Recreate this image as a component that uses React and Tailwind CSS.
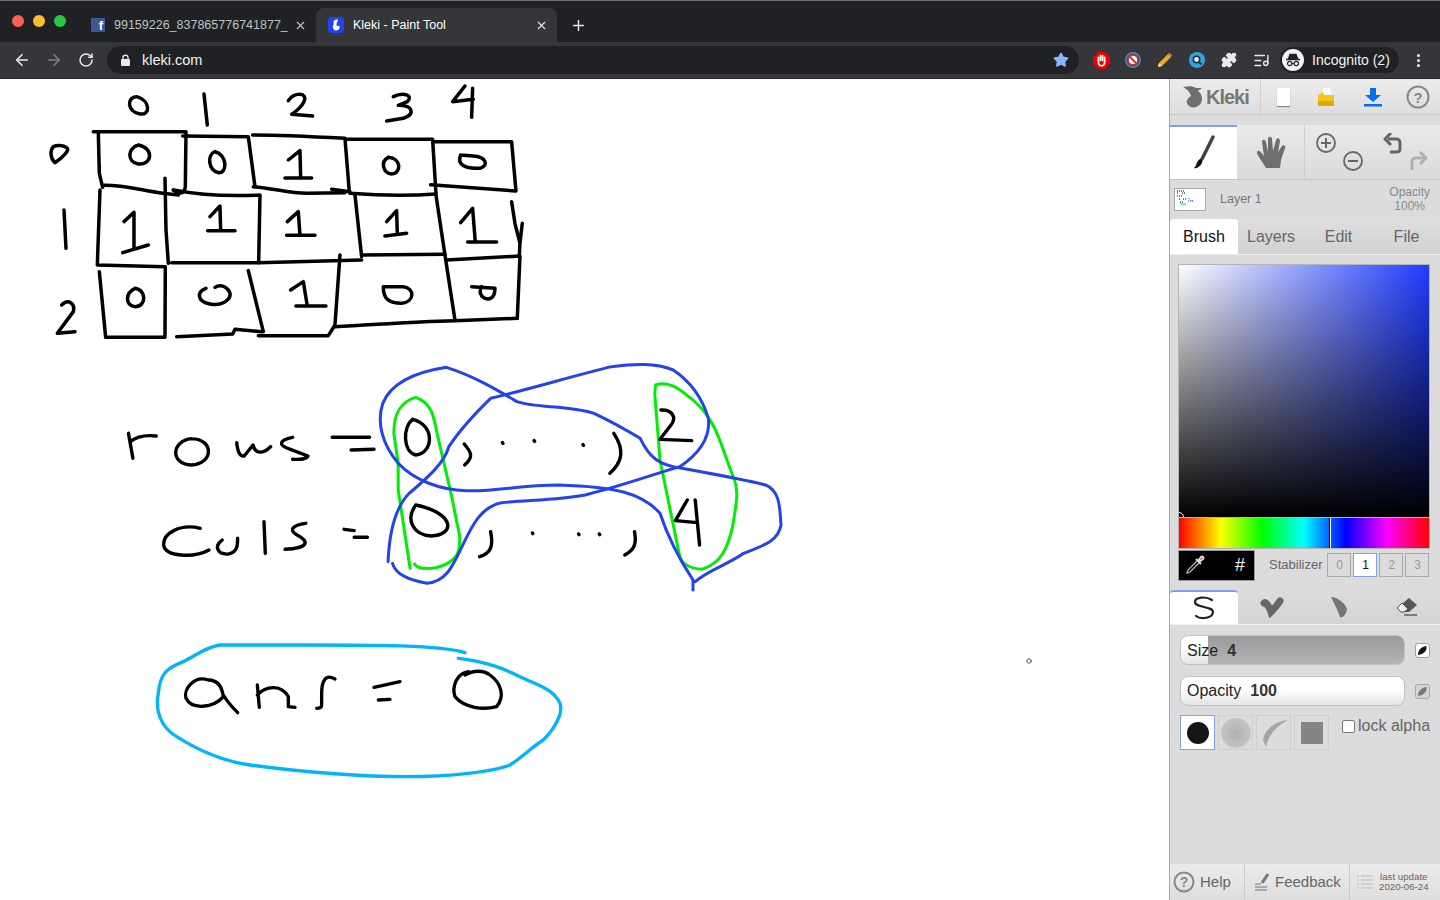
import { ArrowLeft, ArrowRight, RotateCw, Star, X, Plus, Puzzle, EllipsisVertical, ListMusic } from 'lucide-react';

const sans = { fontFamily: '"Liberation Sans", Arial, sans-serif' };

// strokes read off the drawing, in zoomed-crop coordinates
const tableStrokes = [
  // column and row labels
  'M290 50C258 52 262 95 300 102C332 106 332 62 290 50', 'M492 42L502 135',
  'M745 62C762 35 805 36 792 65C782 85 762 98 755 103L818 108',
  'M1060 50C1090 35 1122 45 1102 65L1075 76C1120 76 1126 102 1090 115L1040 123',
  'M1275 18L1238 65L1300 58M1298 25L1295 112',
  'M40 200C30 210 30 235 45 248C65 235 92 210 80 203C70 195 50 195 40 200', 'M72 390L78 505',
  'M65 675C85 655 106 670 100 695L52 760L105 755',
  // grid lines
  'M160 155L438 155L436 320C434 342 415 345 400 330',
  'M175 160L178 280L188 322', 'M190 316C250 315 300 330 370 340L415 345',
  'M428 168L625 170L645 320', 'M375 295L378 450L385 550',
  'M400 330C480 345 560 350 660 345L656 548', 'M638 165C720 165 820 170 915 175L928 335',
  'M640 320C700 325 750 340 800 340L915 338', 'M875 328L930 335',
  'M918 178L1178 178L1188 340', 'M930 340C1000 345 1100 348 1188 342',
  'M1180 185L1415 185L1428 333L1172 314', 'M180 330L172 555L375 560', 'M945 345L965 530',
  'M1188 345L1215 525L1245 720', 'M395 548L655 548L965 540', 'M965 525L1215 523',
  'M1220 540L1440 528L1432 715', 'M1415 365L1425 430L1440 490M1447 430L1440 490L1438 530',
  'M178 575L197 772L375 772L376 560', 'M410 770L578 762L585 748L665 755', 'M625 572L670 755',
  'M655 767L865 767L885 735L900 525', 'M885 740C1000 735 1100 725 1245 722L1432 715',
  // cell values, row 0
  'M295 195C262 205 260 245 295 252C335 256 345 205 295 195',
  'M525 215C500 225 505 270 535 278C565 280 560 222 525 215',
  'M745 240L780 212L782 292M735 294L815 294',
  'M1045 232C1020 245 1030 280 1055 282C1085 280 1085 235 1045 232',
  'M1262 225C1250 255 1275 265 1320 265C1350 255 1335 230 1300 228L1262 225',
  // row 1
  'M252 425L282 397L282 505M248 518L325 495',
  'M510 410L540 378L542 452M503 452L585 452',
  'M742 425L775 395L780 466M740 466L825 466',
  'M1040 425L1070 392L1072 462M1035 468L1100 460',
  'M1262 428L1298 385L1306 486M1283 486L1370 486',
  // row 2
  'M285 625C255 640 255 675 285 680C320 680 320 630 285 625',
  'M498 625C470 635 470 665 510 672C550 680 590 650 560 625C550 615 535 615 525 622',
  'M752 630L790 605L802 678M768 678L858 678',
  'M1030 620C1030 660 1050 670 1085 670C1125 665 1125 625 1090 620L1030 620',
  'M1295 620L1365 625C1365 655 1350 660 1335 655C1315 645 1320 625 1325 620',
];

const rowsColsBlack = [
  'M42 250L52 325M46 275C62 258 85 255 105 258',
  'M185 266C140 272 135 342 185 345C235 342 238 268 185 266',
  'M288 278C290 305 295 320 305 318L325 285C330 310 345 315 365 290',
  'M415 262C385 270 380 285 410 298L450 318C445 330 430 328 415 328',
  'M505 262L590 262M548 300L600 298',
  'M688 208C665 230 665 305 695 315C735 310 740 225 688 208',
  'M805 282C820 305 828 320 806 345',
  'M892 278L893 280M964 272L965 274M1075 284L1076 286',
  'M1145 250C1170 300 1165 335 1136 370',
  'M1252 180C1275 178 1290 200 1275 225L1250 268L1322 272',
  // cols
  'M205 535C160 520 120 550 122 585C125 620 190 625 225 600',
  'M255 570C235 590 245 615 270 612C290 605 290 585 290 565',
  'M350 515L353 610',
  'M445 520C415 525 405 540 425 555C455 575 450 595 398 598',
  'M532 538L555 542M555 562L585 562',
  'M695 465C670 510 690 555 730 558C785 555 785 490 695 465',
  'M865 545C872 590 865 610 840 620',
  'M960 549L961 551M1065 552L1066 554M1112 552L1113 554',
  'M1192 545C1198 585 1190 600 1170 615',
  'M1312 450L1285 512L1335 518M1330 450L1340 585',
];

const rowsColsGreen = [
  'M682 655L655 420L655 340L645 250C645 190 660 155 695 142C730 160 735 190 745 260L775 430L795 560C795 610 790 625 760 645C735 660 700 660 692 642',
  'M1240 105C1275 90 1300 125 1325 150C1380 215 1385 275 1415 375C1430 420 1425 450 1415 530C1405 590 1390 640 1345 658C1315 655 1300 640 1295 620L1270 460L1250 330L1238 130Z',
];

const rowsColsBlue = [
  'M632 635C635 540 650 470 680 430C720 385 760 340 770 290C795 240 830 190 865 145C960 115 1060 75 1140 50C1190 42 1240 38 1280 60C1320 95 1345 140 1360 205C1365 265 1340 310 1295 350C1230 375 1170 405 1080 435C1020 450 950 450 890 458C845 470 825 520 800 590C780 645 765 695 720 700C680 690 650 675 642 640',
  'M1325 720L1325 690C1300 640 1270 570 1250 490C1210 430 1150 410 1020 405C930 405 880 425 810 422C750 420 690 390 655 340C620 285 605 220 620 160C640 95 700 65 765 52C830 80 880 120 925 155C970 175 1040 165 1100 190C1140 215 1180 245 1205 265C1225 320 1245 345 1300 355C1360 370 1430 385 1490 405C1525 425 1522 480 1525 525C1520 570 1490 585 1440 610C1410 640 1360 660 1330 695',
];

const ansBlack = [
  'M205 150C160 135 130 180 138 205C155 240 220 235 250 200C245 160 225 150 205 150M250 195C265 220 280 235 293 248',
  'M352 165L358 232M352 195C380 165 425 165 445 200L445 230L465 232',
  'M585 147C555 130 545 155 545 190L545 225C545 235 535 235 530 235',
  'M702 172L780 155M715 210L750 208',
  'M985 125C950 130 935 170 945 200C975 235 1030 240 1070 230C1095 200 1085 160 1050 135C1030 120 1000 120 975 135',
];

const ansBlue = [
  'M975 68C900 45 700 45 500 45L240 45C200 50 170 75 130 95C80 115 60 130 55 190C45 240 60 290 110 320C180 365 260 395 330 405C480 425 640 440 800 440C930 440 1060 425 1110 405C1150 380 1170 355 1210 330C1245 295 1270 250 1260 220C1240 175 1190 165 1140 140C1090 115 1040 95 955 85',
];

function Canvas() {
  return (
    <div className="flex-1 bg-white">
      <svg width="1169" height="821" viewBox="0 79 1169 821" fill="none" strokeLinecap="round" strokeLinejoin="round">
        <g transform="translate(40 80) scale(0.3333)" stroke="#000" strokeWidth="10.5">
          {tableStrokes.map(d => <path key={d} d={d} />)}
        </g>
        {/* this crop was wider than it was tall, so x and y scale differently */}
        <g transform="translate(110 350) scale(0.44 0.3333)">
          <g stroke="#00ee00" strokeWidth="3">{rowsColsGreen.map(d => <path key={d} d={d} vectorEffect="non-scaling-stroke" />)}</g>
          <g stroke="#000" strokeWidth="3.4">{rowsColsBlack.map(d => <path key={d} d={d} vectorEffect="non-scaling-stroke" />)}</g>
          <g stroke="#2342f0" strokeWidth="3">{rowsColsBlue.map(d => <path key={d} d={d} vectorEffect="non-scaling-stroke" />)}</g>
        </g>
        <g transform="translate(140 630) scale(0.3333)" strokeWidth="10">
          <g stroke="#000">{ansBlack.map(d => <path key={d} d={d} />)}</g>
          <g stroke="#00b4ff">{ansBlue.map(d => <path key={d} d={d} />)}</g>
        </g>
        <circle cx="1029" cy="661" r="2.2" stroke="#555" strokeWidth="1" />
      </svg>
    </div>
  );
}

function BrowserChrome() {
  return (
    <div className="shrink-0 text-white" style={sans}>
      <div className="h-[42px] bg-[#202124] border-t border-[#6b6c6e] flex items-end">
        <div className="flex gap-[9px] pl-[12px] self-start pt-[14px] w-[88px]">
          <span className="w-3 h-3 rounded-full bg-[#ff5f57]" />
          <span className="w-3 h-3 rounded-full bg-[#ffbd2e]" />
          <span className="w-3 h-3 rounded-full bg-[#28c941]" />
        </div>
        <div className="w-[228px] h-[34px] flex items-center pl-[3px] pr-[9px] text-[12.5px] text-[#bdc1c6]">
          <span className="w-[14px] h-[14px] bg-[#3b5998] flex items-end justify-end pr-[2px] text-white text-[13px] font-bold leading-none overflow-hidden shrink-0">f</span>
          <span className="ml-[9px] w-[174px] overflow-hidden whitespace-nowrap">99159226_837865776741877_</span>
          <X size={13} strokeWidth={2} className="ml-auto text-[#c4c7cb]" />
        </div>
        <div className="w-[241px] h-[34px] bg-[#35363a] rounded-t-lg flex items-center pl-[12px] pr-[9px] text-[12.5px]">
          <svg width="16" height="16" viewBox="0 0 16 16" className="shrink-0">
            <rect width="16" height="16" rx="4" fill="#2342f0" />
            <path d="M10 2.5C6 2 4.5 5 6 7C4 9 4.5 13 8 13.5C11.5 13.5 12.5 10 11 8.5C10 9.5 8.5 9 8.5 7.5C8.5 5.5 10 4.5 10 2.5Z" fill="#fff" />
          </svg>
          <span className="ml-[9px]">Kleki - Paint Tool</span>
          <X size={13} strokeWidth={2} className="ml-auto text-[#e8eaed]" />
        </div>
        <Plus size={17} strokeWidth={2} className="ml-[13px] mb-[8px] text-[#e8eaed]" />
      </div>
      <div className="h-[37px] bg-[#35363a] flex items-center border-b border-[#28292c]">
        <ArrowLeft size={18} strokeWidth={2.2} className="ml-[13px] text-[#e8eaed]" />
        <ArrowRight size={18} strokeWidth={2} className="ml-[14px] text-[#7f8184]" />
        <RotateCw size={16} strokeWidth={2.2} className="ml-[15px] text-[#e8eaed]" />
        <div className="ml-[13px] w-[972px] h-[28px] bg-[#202124] rounded-full flex items-center pl-[14px] pr-[10px]">
          <svg width="9" height="12" viewBox="0 0 9 12" fill="none">
            <rect y="5" width="9" height="7" rx="1" fill="#e8eaed" />
            <path d="M2 5.5V3.2C2 .6 7 .6 7 3.2V5.5" stroke="#e8eaed" strokeWidth="1.3" />
          </svg>
          <span className="ml-[12px] mt-[1px] text-[14.5px] text-[#f1f3f4]">kleki.com</span>
          <Star size={16} fill="#8ab4f8" stroke="#8ab4f8" className="ml-auto" />
        </div>
        <div className="ml-[6px] w-[32px] flex justify-center">
          <svg width="17" height="17" viewBox="0 0 16 16">
            <path d="M5 0H11L16 5V11L11 16H5L0 11V5Z" fill="#ee0000" />
            <path d="M5 9V5M7 8V3.5M9 8V3.5M11 9V5M5 9C5 12 6.5 13 8 13C10 13 11 11.5 11 9" stroke="#fff" strokeWidth="1.6" fill="none" strokeLinecap="round" />
          </svg>
        </div>
        <div className="w-[32px] flex justify-center">
          <svg width="16" height="16" viewBox="0 0 16 16" fill="none">
            <circle cx="8" cy="8" r="7.2" stroke="#4a90d9" strokeWidth="1.4" />
            <circle cx="8" cy="8" r="5" stroke="#d0312d" strokeWidth="1.8" fill="#fff" />
            <path d="M4.5 4.5L11.5 11.5" stroke="#d0312d" strokeWidth="1.8" />
          </svg>
        </div>
        <div className="w-[32px] flex justify-center">
          <svg width="16" height="16" viewBox="0 0 16 16">
            <path d="M1 15L2 11L11 2L14 5L5 14Z" fill="#f5a623" />
            <path d="M11 2L12.5 .8L15.2 3.5L14 5Z" fill="#e8734a" />
            <path d="M1 15L2 11L5 14Z" fill="#f7dfb5" />
          </svg>
        </div>
        <div className="w-[32px] flex justify-center">
          <svg width="16" height="16" viewBox="0 0 16 16" fill="none">
            <circle cx="8" cy="8" r="8" fill="#2ea7e0" />
            <circle cx="7.5" cy="7.5" r="3.2" stroke="#21313c" strokeWidth="1.6" fill="#e6f5fb" />
            <path d="M10 10L12.5 12.5" stroke="#21313c" strokeWidth="1.8" />
          </svg>
        </div>
        <div className="w-[32px] flex justify-center">
          <Puzzle size={16} fill="#e8eaed" stroke="#e8eaed" />
        </div>
        <div className="w-[32px] flex justify-center">
          <ListMusic size={17} strokeWidth={2} className="text-[#e8eaed]" />
        </div>
        <div className="ml-[3px] w-[119px] h-[26px] bg-[#202124] rounded-full flex items-center pl-[2px]">
          <span className="w-[22px] h-[22px] rounded-full bg-[#f1f3f4] flex items-center justify-center">
            <svg width="16" height="14" viewBox="0 0 16 14" fill="none">
              <path d="M1 6.5H15M3.5 6L5 1.5H11L12.5 6" stroke="#202124" strokeWidth="1.5" fill="#202124" />
              <circle cx="4.7" cy="10.5" r="2.2" stroke="#202124" strokeWidth="1.2" />
              <circle cx="11.3" cy="10.5" r="2.2" stroke="#202124" strokeWidth="1.2" />
              <path d="M6.9 10.5H9.1" stroke="#202124" strokeWidth="1.2" />
            </svg>
          </span>
          <span className="ml-[8px] text-sm text-[#f1f3f4] whitespace-nowrap">Incognito (2)</span>
        </div>
        <EllipsisVertical size={17} strokeWidth={2.4} className="ml-[11px] text-[#e8eaed]" />
      </div>
    </div>
  );
}

function SliderRow({ label, value, fillPct, active, textClass }) {
  return (
    <div className="flex items-center h-[30px]">
      <div className="relative w-[225px] h-[30px] rounded-lg border border-[#c2c2c2] overflow-hidden bg-[linear-gradient(to_bottom,#ffffff_45%,#e4e4e4)]">
        <div
          className="absolute top-0 bottom-0 right-0 bg-[linear-gradient(to_bottom,#9a9a9a,#b4b4b4)]"
          style={{ left: fillPct }}
        />
        <div className={`relative px-[6px] text-base text-[#222] whitespace-nowrap ${textClass}`}>
          {label}<span className="ml-[9px] font-bold text-[#333]">{value}</span>
        </div>
      </div>
      <div className={`ml-[10px] w-[15px] h-[15px] rounded-[3px] border flex items-center justify-center ${active ? 'bg-white border-[#7ea1f0]' : 'bg-[#d4d4d4] border-[#aaa]'}`}>
        <svg width="11" height="11" viewBox="0 0 11 11">
          <path d="M1 10C1 6 3 2 9.5 1C10 6 7 9 1 10Z" fill={active ? '#111' : '#777'} />
        </svg>
      </div>
    </div>
  );
}

function Sidebar() {
  return (
    <div className="w-[271px] shrink-0 bg-[#dcdcdc] border-l border-[#a8a8a8] flex flex-col text-[#666]" style={sans}>
      {/* top bar */}
      <div className="h-[36px] flex items-center border-b border-[#c8c8c8] bg-[linear-gradient(to_bottom,#ececec,#dedede)]">
        <div className="w-[91px] h-full flex items-center pl-[12px] border-r border-[#d0d0d0]">
          <svg width="24" height="24" viewBox="0 0 24 24">
            <path d="M1 2C6 1 11 1 14 3L20 3L16 6C20 9 21 14 19 18C16 23 9 24 6 20C3 16 6 13 9 11C8 7 5 4 1 2Z" fill="#6f6f6f" />
          </svg>
          <span className="text-[20px] font-bold text-[#777] tracking-[-1px] leading-none">Kleki</span>
        </div>
        <div className="flex-1 flex items-center">
          <div className="ml-[16px] w-[13px] h-[18px] bg-white shadow-[0_1px_1px_#777] rounded-[1px]" />
          <svg width="18" height="20" viewBox="0 0 18 20" className="ml-[27px]">
            <path d="M5 1L13 0L15 8H6Z" fill="#fff" stroke="#ddd" strokeWidth=".5" />
            <path d="M1 8L6 5L7 8H17V19H1Z" fill="#f5c518" />
            <path d="M1 14H17V19H1Z" fill="#e0a800" />
          </svg>
          <svg width="20" height="20" viewBox="0 0 20 20" className="ml-[28px]">
            <path d="M7 1H13V8H18L10 15L2 8H7Z" fill="#0a6ce8" />
            <rect x="1" y="17" width="18" height="2.5" fill="#0a6ce8" />
          </svg>
          <svg width="24" height="24" viewBox="0 0 24 24" fill="none" className="ml-[23px]">
            <circle cx="12" cy="12" r="10.5" stroke="#888" strokeWidth="2" />
            <text x="12" y="17.5" textAnchor="middle" fontSize="15" fontWeight="700" fill="#888" fontFamily="Liberation Sans">?</text>
          </svg>
        </div>
      </div>
      <div className="h-[10px]" />
      {/* tool row */}
      <div className="h-[55px] flex border-b border-[#c4c4c4] bg-[linear-gradient(to_bottom,#eaeaea,#dadada)]">
        <div className="w-[67px] bg-white border-t-2 border-[#7a9ff5] flex items-center justify-center">
          <svg width="24" height="36" viewBox="0 0 24 36" fill="none">
            <path d="M21 2L10 24" stroke="#444" strokeWidth="3.5" strokeLinecap="round" />
            <path d="M8 24C10 24 11 26 10 28C8 32 4 34 2 33C5 31 4 26 8 24Z" fill="#111" />
          </svg>
        </div>
        <div className="w-[68px] flex items-center justify-center border-r border-[#cfcfcf]">
          <svg width="30" height="34" viewBox="0 0 30 34">
            <path d="M10 33L3 22C1 19 0 17 2 16C4 15 7 20 8 21L6 7C6 4 9 4 10 7L12 17L12 4C12 1 16 1 16 4L17 16L20 5C21 2 24 3 24 6L22 17L26 11C28 9 30 11 29 13L25 25L24 33Z" fill="#6e6e6e" />
          </svg>
        </div>
        <div className="w-[67px] flex items-center justify-center">
          <svg width="48" height="38" viewBox="0 0 48 38" fill="none" stroke="#666" strokeWidth="1.8">
            <circle cx="11" cy="10" r="9" />
            <path d="M6 10H16M11 5V15" strokeWidth="2" />
            <circle cx="38" cy="28" r="9" />
            <path d="M33 28H43" strokeWidth="2" />
          </svg>
        </div>
        <div className="flex-1 flex items-center justify-center">
          <svg width="48" height="38" viewBox="0 0 48 38" fill="none" strokeWidth="3" strokeLinejoin="round">
            <path d="M6 6H14C17 6 18 7 18 10V16C18 18 17 19 14 19H8" stroke="#666" />
            <path d="M9 0L3 6L9 12" stroke="#666" />
            <path d="M43 25H34C31 25 30 26 30 29V37" stroke="#b0b0b0" />
            <path d="M38 19L44 25L38 31" stroke="#b0b0b0" />
          </svg>
        </div>
      </div>
      {/* layer row */}
      <div className="h-[39px] flex items-center pl-[4px] pr-[10px] bg-[#dcdcdc]">
        <div className="w-[32px] h-[23px] bg-white border border-[#aaa] shrink-0">
          <svg width="30" height="21" viewBox="0 0 30 21">
            <path d="M2 2H9M2 4H4M7 4H11M2 7H7M4 10H6M8 10H12M5 13H8" stroke="#000" strokeWidth="1" strokeDasharray="1 1" />
            <path d="M13 12H19M14 9V10M17 11V12" stroke="#2342f0" strokeWidth="1" strokeDasharray="1 1" />
            <path d="M5 15H11" stroke="#00b4ff" strokeWidth="1" />
          </svg>
        </div>
        <span className="ml-[14px] text-[12.5px] text-[#777]">Layer 1</span>
        <span className="ml-auto mb-[2px] text-xs leading-[14px] text-[#8a8a8a] text-center">Opacity<br />100%</span>
      </div>
      {/* tabs */}
      <div className="h-[36px] flex items-stretch border-b border-[#eee] bg-[linear-gradient(to_bottom,#dedede,#d2d2d2)] text-base">
        <div className="w-[68px] bg-white rounded-t-[4px] flex items-center justify-center text-[#111]">Brush</div>
        <div className="w-[66px] flex items-center justify-center">Layers</div>
        <div className="w-[69px] flex items-center justify-center">Edit</div>
        <div className="w-[67px] flex items-center justify-center">File</div>
      </div>
      {/* colour picker */}
      <div className="mt-[9px] ml-[8px] w-[252px] flex flex-col">
        <div className="relative h-[254px] border border-[#b4b4b4] bg-[linear-gradient(to_bottom,transparent,#000),linear-gradient(to_right,#fff,#1f3cff)] overflow-hidden">
          <span className="absolute left-[-5px] bottom-[-5px] w-[10px] h-[10px] rounded-full border border-white" />
        </div>
        <div className="relative h-[31px] border border-[#b4b4b4] border-t-0 bg-[linear-gradient(to_right,#f00,#ff0,#0f0,#0ff,#00f,#f0f,#f00)]">
          <span className="absolute left-[150px] top-0 bottom-0 w-[2px] bg-white border-l border-black" />
        </div>
        <div className="flex items-center h-[32px]">
          <div className="w-[77px] h-[31px] bg-black border border-[#999] flex items-center justify-between pl-[6px] pr-[9px]">
            <svg width="20" height="20" viewBox="0 0 20 20" fill="none">
              <path d="M12 6L3 15L2 18L5 17L14 8" stroke="#bbb" strokeWidth="1.2" />
              <path d="M11 4L16 9M13 6L16 2C17.5 1 19 2.5 18 4L14 7" stroke="#ddd" strokeWidth="2" />
            </svg>
            <span className="text-white text-lg leading-none">#</span>
          </div>
          <span className="ml-[14px] text-[13px] text-[#666]">Stabilizer</span>
          <div className="ml-[5px] flex gap-[2px] text-xs">
            <div className="w-[24px] h-[24px] border border-[#aaa] flex items-center justify-center text-[#999]">0</div>
            <div className="w-[24px] h-[24px] border border-[#7ea1f0] bg-white flex items-center justify-center text-[#111]">1</div>
            <div className="w-[24px] h-[24px] border border-[#aaa] flex items-center justify-center text-[#999]">2</div>
            <div className="w-[24px] h-[24px] border border-[#aaa] flex items-center justify-center text-[#999]">3</div>
          </div>
        </div>
      </div>
      {/* brush type tabs */}
      <div className="mt-[9px] h-[35px] flex border-b border-[#f2f2f2] bg-[linear-gradient(to_bottom,#dcdcdc,#d4d4d4)]">
        <div className="w-[68px] bg-white border-t-2 border-[#7ea1f0] rounded-t-[4px] flex items-center justify-center">
          <svg width="24" height="26" viewBox="0 0 24 26" fill="none">
            <path d="M20 5C14 1 3 2 3 7C3 13 21 11 21 17C21 23 9 25 4 21" stroke="#222" strokeWidth="2.2" strokeLinecap="round" />
          </svg>
        </div>
        <div className="w-[67px] flex items-center justify-center">
          <svg width="24" height="22" viewBox="0 0 24 22" fill="none" className="blur-[0.7px]">
            <path d="M4 7C5 5 9 10 11 16C14 13 18 8 20 5" stroke="#666" strokeWidth="7" strokeLinecap="round" />
          </svg>
        </div>
        <div className="w-[68px] flex items-center justify-center">
          <svg width="20" height="24" viewBox="0 0 20 24" className="blur-[0.7px]">
            <path d="M2 2C8 2 16 8 18 14C17 20 14 23 11 22C9 16 6 10 2 2Z" fill="#757575" />
          </svg>
        </div>
        <div className="flex-1 flex items-center justify-center">
          <svg width="24" height="20" viewBox="0 0 24 20">
            <path d="M14 1L22 8L14 15L8 15L2 11Z" fill="#555" />
            <path d="M2 11L7 6L13 12L9 15H6Z" fill="#eee" stroke="#555" />
            <path d="M9 18H22" stroke="#555" strokeWidth="1.4" />
          </svg>
        </div>
      </div>
      {/* sliders */}
      <div className="mt-[10px] ml-[10px] flex flex-col gap-[11px]">
        <SliderRow label="Size" value="4" fillPct="27px" active textClass="leading-[29px]" />
        <SliderRow label="Opacity" value="100" fillPct="100%" textClass="leading-[27px]" />
      </div>
      {/* brush shapes */}
      <div className="mt-[9px] ml-[10px] flex items-start">
        <div className="w-[35px] h-[35px] border border-[#7ea1f0] bg-white flex items-center justify-center">
          <span className="w-[22px] h-[22px] rounded-full bg-[#151515]" />
        </div>
        <div className="ml-[3px] w-[35px] h-[35px] border border-[#cfcfcf] flex items-center justify-center">
          <span className="w-[30px] h-[30px] rounded-full bg-[radial-gradient(circle,#b0b0b0,#c4c4c4_70%,#d4d4d4)]" />
        </div>
        <div className="ml-[3px] w-[35px] h-[35px] border border-[#cfcfcf] flex items-center justify-center">
          <svg width="30" height="30" viewBox="0 0 30 30">
            <path d="M29 2C18 3 6 10 4 22L7 29C9 20 14 10 29 2Z" fill="#a5a5a5" />
          </svg>
        </div>
        <div className="ml-[3px] w-[35px] h-[35px] border border-[#cfcfcf] flex items-center justify-center">
          <span className="w-[22px] h-[22px] bg-[#858585]" />
        </div>
        <label className="ml-[13px] mt-[1px] flex items-center text-base text-[#666] leading-[20px]">
          <span className="w-[13px] h-[13px] bg-white border border-[#777] rounded-[2px]" />
          <span className="ml-[3px]">lock alpha</span>
        </label>
      </div>
      <div className="flex-1" />
      {/* bottom bar */}
      <div className="h-[36px] flex bg-[linear-gradient(to_bottom,#ebebeb,#dedede)]">
        <div className="w-[75px] flex items-center pl-[3px] border-r border-[#cbcbcb]">
          <svg width="22" height="22" viewBox="0 0 22 22" fill="none">
            <circle cx="11" cy="11" r="9.5" stroke="#888" strokeWidth="2" />
            <text x="11" y="16" textAnchor="middle" fontSize="14" fontWeight="700" fill="#888" fontFamily="Liberation Sans">?</text>
          </svg>
          <span className="ml-[5px] text-[15px]">Help</span>
        </div>
        <div className="w-[105px] flex items-center pl-[7px] border-r border-[#cbcbcb]">
          <svg width="20" height="20" viewBox="0 0 14 20" fill="none" className="mr-[3px]">
            <path d="M7 11L13 2" stroke="#777" strokeWidth="3" />
            <path d="M0 12H6M0 15H12M0 18H12" stroke="#999" strokeWidth="1.5" />
          </svg>
          <span className="text-[15px]">Feedback</span>
        </div>
        <div className="flex-1 flex items-center pl-[7px]">
          <svg width="16" height="16" viewBox="0 0 16 16" fill="none" stroke="#bbb" strokeWidth="1.2">
            <path d="M0 2H2M4 2H16M0 6H2M4 6H16M0 10H2M4 10H16M0 14H2M4 14H16" />
          </svg>
          <span className="ml-[6px] text-[9.7px] leading-[10px] text-center text-[#666]">last update<br />2020-06-24</span>
        </div>
      </div>
    </div>
  );
}

export default function App() {
  return (
    <div className="w-[1440px] h-[900px] flex flex-col overflow-hidden">
      <BrowserChrome />
      <div className="flex-1 flex min-h-0">
        <Canvas />
        <Sidebar />
      </div>
    </div>
  );
}
